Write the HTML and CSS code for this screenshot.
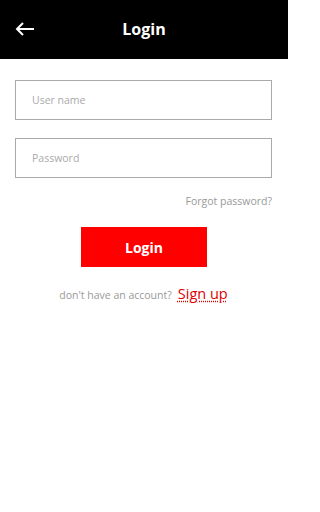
FILE: index.html
```html
<!DOCTYPE html>
<html>
<head>
<meta charset="utf-8">
<link rel="stylesheet" href="styles.css">
</head>
<body>
<header class="topbar">
  <span class="back">
    <svg width="20" height="14" viewBox="0 0 20 14"><path d="M19 7H2M8 1L2 7l6 6" fill="none" stroke="#fff" stroke-width="2"/></svg>
  </span>
  <h1 class="title">Login</h1>
</header>
<main class="form">
  <div class="field"><span class="ph">User name</span></div>
  <div class="field"><span class="ph">Password</span></div>
  <div class="forgot">Forgot password?</div>
  <div class="btnrow"><button class="btn">Login</button></div>
  <div class="signup"><span class="q">don't have an account?</span><a class="link">Sign up</a></div>
</main>
</body>
</html>
```
FILE: styles.css
```css
* { box-sizing: border-box; }
html, body { margin: 0; padding: 0; background: #fff; }
body { font-family: "Open Sans", sans-serif; width: 288px; height: 512px; overflow: hidden; }
.topbar { height: 59px; background: #000; display: flex; align-items: center; justify-content: center; position: relative; padding-bottom: 2px; }
.back { position: absolute; left: 15px; top: 22px; display: flex; }
.title { margin: 0; color: #fff; font-size: 16px; font-weight: 700; line-height: 22px; }
.form { padding: 21px 16px 0 15px; display: flex; flex-direction: column; }
.field { height: 40px; border: 1px solid #aaa; display: flex; align-items: center; padding-left: 16px; margin-bottom: 18px; }
.ph { font-size: 10.5px; color: #aaa; }
.forgot { align-self: flex-end; font-size: 10.5px; color: #999; margin-top: -2px; line-height: 14px; }
.btnrow { display: flex; justify-content: center; margin-top: 19px; }
.btn { width: 126px; height: 40px; background: #ff0000; border: 0; color: #fff; font-family: "Open Sans", sans-serif; font-weight: 700; font-size: 14px; margin-left: 1px; padding: 0; }
.signup { display: flex; justify-content: center; align-items: baseline; margin-top: 17px; gap: 6px; margin-left: 0; }
.q { font-size: 10.5px; color: #999; }
.link { font-size: 14.5px; color: #e00000; text-decoration: underline dotted #e00000; text-underline-offset: 2px; }
```
